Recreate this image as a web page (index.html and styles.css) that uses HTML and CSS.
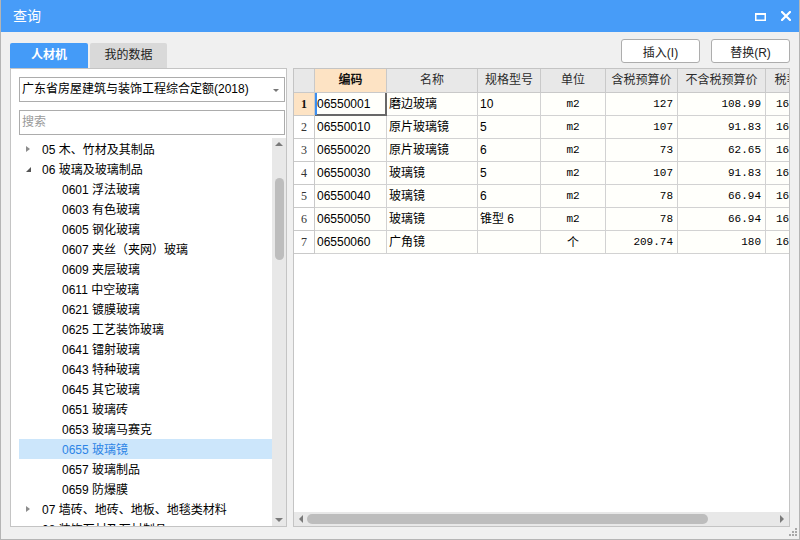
FILE: index.html
```html
<!DOCTYPE html>
<html lang="zh">
<head>
<meta charset="utf-8">
<title>查询</title>
<link rel="stylesheet" href="styles.css">
</head>
<body>
<div class="window">
  <div class="titlebar">
    <span class="title">查询</span>
    <div class="ctrls">
      <svg class="ic-max" width="11" height="8" viewBox="0 0 11 8"><rect x="0.75" y="1" width="9.5" height="6.25" fill="none" stroke="#fff" stroke-width="1.5"/><rect x="0" y="0" width="11" height="2" fill="#fff"/></svg>
      <svg class="ic-close" width="10" height="10" viewBox="0 0 10 10"><path d="M1 1L9 9M9 1L1 9" stroke="#fff" stroke-width="2.2" stroke-linecap="square"/></svg>
    </div>
  </div>

  <div class="toolbar">
    <div class="tabs">
      <div class="tab active">人材机</div>
      <div class="tab">我的数据</div>
    </div>
    <div class="btns">
      <button class="btn">插入(I)</button>
      <button class="btn">替换(R)</button>
    </div>
  </div>

  <div class="main">
    <div class="left">
      <div class="select">广东省房屋建筑与装饰工程综合定额(2018)<span class="caret"></span></div>
      <div class="search">搜索</div>
      <div class="tree">
        <div class="tree-list">
          <div class="node l1"><span class="arr closed"></span>05 木、竹材及其制品</div>
          <div class="node l1"><span class="arr open"></span>06 玻璃及玻璃制品</div>
          <div class="node l2">0601 浮法玻璃</div>
          <div class="node l2">0603 有色玻璃</div>
          <div class="node l2">0605 钢化玻璃</div>
          <div class="node l2">0607 夹丝（夹网）玻璃</div>
          <div class="node l2">0609 夹层玻璃</div>
          <div class="node l2">0611 中空玻璃</div>
          <div class="node l2">0621 镀膜玻璃</div>
          <div class="node l2">0625 工艺装饰玻璃</div>
          <div class="node l2">0641 镭射玻璃</div>
          <div class="node l2">0643 特种玻璃</div>
          <div class="node l2">0645 其它玻璃</div>
          <div class="node l2">0651 玻璃砖</div>
          <div class="node l2">0653 玻璃马赛克</div>
          <div class="node l2 sel">0655 玻璃镜</div>
          <div class="node l2">0657 玻璃制品</div>
          <div class="node l2">0659 防爆膜</div>
          <div class="node l1"><span class="arr closed"></span>07 墙砖、地砖、地板、地毯类材料</div>
          <div class="node l1"><span class="arr closed"></span>08 装饰石材及石材制品</div>
        </div>
        <div class="vscroll">
          <div class="sb-up"></div>
          <div class="sb-track"><div class="sb-thumb"></div></div>
          <div class="sb-down"></div>
        </div>
      </div>
    </div>

    <div class="right">
      <div class="grid-wrap">
        <div class="grid">
          <div class="h rn"></div>
          <div class="h hl">编码</div>
          <div class="h">名称</div>
          <div class="h">规格型号</div>
          <div class="h">单位</div>
          <div class="h">含税预算价</div>
          <div class="h">不含税预算价</div>
          <div class="h">税率</div>

          <div class="c rn hl">1</div><div class="c code focus">06550001</div><div class="c name">磨边玻璃</div><div class="c spec">10</div><div class="c unit">m2</div><div class="c num">127</div><div class="c num">108.99</div><div class="c tax">16</div>
          <div class="c rn">2</div><div class="c code">06550010</div><div class="c name">原片玻璃镜</div><div class="c spec">5</div><div class="c unit">m2</div><div class="c num">107</div><div class="c num">91.83</div><div class="c tax">16</div>
          <div class="c rn">3</div><div class="c code">06550020</div><div class="c name">原片玻璃镜</div><div class="c spec">6</div><div class="c unit">m2</div><div class="c num">73</div><div class="c num">62.65</div><div class="c tax">16</div>
          <div class="c rn">4</div><div class="c code">06550030</div><div class="c name">玻璃镜</div><div class="c spec">5</div><div class="c unit">m2</div><div class="c num">107</div><div class="c num">91.83</div><div class="c tax">16</div>
          <div class="c rn">5</div><div class="c code">06550040</div><div class="c name">玻璃镜</div><div class="c spec">6</div><div class="c unit">m2</div><div class="c num">78</div><div class="c num">66.94</div><div class="c tax">16</div>
          <div class="c rn">6</div><div class="c code">06550050</div><div class="c name">玻璃镜</div><div class="c spec">锥型 6</div><div class="c unit">m2</div><div class="c num">78</div><div class="c num">66.94</div><div class="c tax">16</div>
          <div class="c rn">7</div><div class="c code">06550060</div><div class="c name">广角镜</div><div class="c spec"></div><div class="c unit cjk">个</div><div class="c num">209.74</div><div class="c num">180</div><div class="c tax">16</div>
        </div>
      </div>
      <div class="hscroll">
        <div class="hs-left"></div>
        <div class="hs-track"><div class="hs-thumb"></div></div>
        <div class="hs-right"></div>
      </div>
    </div>
  </div>

  <div class="footer">
    <svg class="grip" width="9" height="9" viewBox="0 0 9 9" fill="#a8a8a8">
      <rect x="6" y="0" width="2" height="2"/>
      <rect x="3" y="3" width="2" height="2"/><rect x="6" y="3" width="2" height="2"/>
      <rect x="0" y="6" width="2" height="2"/><rect x="3" y="6" width="2" height="2"/><rect x="6" y="6" width="2" height="2"/>
    </svg>
  </div>
</div>
</body>
</html>
```

FILE: styles.css
```css
* { box-sizing: border-box; }

html, body {
  margin: 0;
  padding: 0;
  background: #f0f0f0;
}

body {
  font-family: "Liberation Sans", "Noto Sans CJK SC", sans-serif;
  font-size: 12px;
  color: #000;
}

.window {
  width: 800px;
  height: 540px;
  display: flex;
  flex-direction: column;
  background: #f0f0f0;
  border: 1px solid #b5b5b5;
  border-top: none;
  overflow: hidden;
}

/* title bar */
.titlebar {
  height: 32px;
  flex: none;
  background: #479cf8;
  display: flex;
  align-items: center;
  justify-content: space-between;
  padding: 0 9px 0 13px;
  margin: 0 -1px;
}

.title {
  color: #fff;
  font-size: 14px;
  line-height: 16px;
}

.ctrls {
  display: flex;
  align-items: center;
  gap: 15px;
}

.ic-max { margin-top: 1px; }

/* toolbar */
.toolbar {
  height: 36px;
  flex: none;
  display: flex;
  justify-content: space-between;
  padding: 0 9px 0 9px;
}

.tabs {
  display: flex;
  align-self: flex-end;
  gap: 2px;
}

.tab {
  width: 77px;
  height: 25px;
  line-height: 25px;
  text-align: center;
  background: #d9d9d9;
  color: #222;
  border-radius: 2px 2px 0 0;
  font-size: 12px;
}

.tab.active {
  width: 78px;
  background: #449bf8;
  color: #fff;
  font-weight: bold;
}

.btns {
  display: flex;
  gap: 11px;
  padding-top: 7px;
}

.btn {
  width: 79px;
  height: 24px;
  background: #fff;
  border: 1px solid #adadad;
  border-radius: 3px;
  font-family: inherit;
  font-size: 12px;
  color: #222;
  padding: 0;
}

/* main area */
.main {
  height: 459px;
  flex: none;
  display: flex;
  gap: 6px;
  padding: 0 9px 0 9px;
}

.left {
  width: 277px;
  flex: none;
  background: #fff;
  border: 1px solid #c4c4c4;
  padding: 8px 0 0 8px;
  display: flex;
  flex-direction: column;
}

.select {
  height: 25px;
  border: 1px solid #acacac;
  line-height: 23px;
  padding-left: 2px;
  position: relative;
  font-size: 12px;
  color: #000;
  margin-right: 1px;
}

.caret {
  position: absolute;
  right: 5px;
  top: 11px;
  width: 0;
  height: 0;
  border-left: 3px solid transparent;
  border-right: 3px solid transparent;
  border-top: 3px solid #777;
}

.search {
  height: 25px;
  margin-top: 8px;
  border: 1px solid #acacac;
  line-height: 23px;
  padding-left: 2px;
  color: #9a9a9a;
  margin-right: 1px;
}

.tree {
  flex: 1;
  min-height: 0;
  margin-top: 3px;
  display: flex;
  overflow: hidden;
}

.tree-list {
  flex: 1;
  padding-top: 1px;
  overflow: hidden;
}

.node {
  height: 20px;
  line-height: 22px;
  white-space: nowrap;
  position: relative;
}

.node.l1 { padding-left: 23px; }
.node.l2 { padding-left: 43px; }

.node.sel {
  background: #cce6fb;
  color: #2d84e6;
}

.arr {
  position: absolute;
  left: 7px;
  top: 7px;
  width: 0;
  height: 0;
}

.arr.closed {
  border-top: 3.5px solid transparent;
  border-bottom: 3.5px solid transparent;
  border-left: 4px solid #8c8c8c;
}

.arr.open {
  top: 8px;
  border-left: 5px solid transparent;
  border-bottom: 5px solid #555;
}

.vscroll {
  width: 14px;
  flex: none;
  background: #e8e8e8;
  display: flex;
  flex-direction: column;
  align-items: center;
}

.sb-up, .sb-down {
  height: 14px;
  width: 14px;
  position: relative;
  flex: none;
}

.sb-up::after, .sb-down::after {
  content: "";
  position: absolute;
  left: 3px;
  width: 0;
  height: 0;
  border-left: 4px solid transparent;
  border-right: 4px solid transparent;
}

.sb-up::after { top: 4px; border-bottom: 4px solid #7a7a7a; }
.sb-down::after { top: 6px; border-top: 4px solid #7a7a7a; }

.sb-track {
  flex: 1;
  width: 14px;
  display: flex;
  justify-content: center;
  padding-top: 26px;
}

.sb-thumb {
  width: 9px;
  height: 82px;
  background: #bdbdbd;
  border-radius: 5px;
}

/* right grid */
.right {
  width: 497px;
  flex: none;
  background: #fff;
  border: 1px solid #c4c4c4;
  display: flex;
  flex-direction: column;
  overflow: hidden;
}

.grid-wrap {
  flex: 1;
  min-height: 0;
  overflow: hidden;
}

.grid {
  display: grid;
  grid-template-columns: 21px 72px 91px 63px 65px 72px 88px 42px;
  grid-template-rows: 24px repeat(7, 23px);
  width: 514px;
}

.h, .c {
  border-right: 1px solid #d2d2d2;
  border-bottom: 1px solid #d2d2d2;
  white-space: nowrap;
  overflow: hidden;
}

.h {
  background: #e8e8e8;
  border-color: #c9c9c9;
  text-align: center;
  line-height: 23px;
  color: #2b2b2b;
}

.h.hl {
  background: #fde3c4;
  font-weight: bold;
  color: #111;
}

.c {
  background: #fffffb;
  line-height: 22px;
}

.c.rn {
  text-align: center;
  font-family: "Liberation Serif", "DejaVu Serif", serif;
  font-size: 12px;
  color: #333;
  background: #fff;
  border-color: #c9c9c9;
}

.c.rn.hl {
  background: #fde3c4;
  font-weight: bold;
  color: #111;
}

.c.code { padding-left: 2px; }

.c.focus {
  border-right-color: #686868;
  border-bottom-color: #686868;
  box-shadow: inset 2px 0 #3b8ef0, inset -1px 0 #686868, inset 0 -1px #686868;
}

.c.name { padding-left: 2px; }
.c.spec { padding-left: 2px; }

.c.unit {
  text-align: center;
  font-family: "Liberation Mono", "DejaVu Sans Mono", monospace;
  font-size: 11px;
}

.c.unit.cjk {
  font-family: "Noto Sans CJK SC", sans-serif;
  font-size: 12px;
}

.c.num {
  text-align: right;
  padding-right: 4px;
  font-family: "Liberation Mono", "DejaVu Sans Mono", monospace;
  font-size: 11px;
}

.c.tax {
  padding-left: 10px;
  font-family: "Liberation Mono", "DejaVu Sans Mono", monospace;
  font-size: 11px;
}

.hscroll {
  height: 14px;
  flex: none;
  background: #e8e8e8;
  display: flex;
  align-items: center;
}

.hs-left, .hs-right {
  width: 13px;
  height: 14px;
  flex: none;
  position: relative;
}

.hs-left::after, .hs-right::after {
  content: "";
  position: absolute;
  top: 3px;
  width: 0;
  height: 0;
  border-top: 4px solid transparent;
  border-bottom: 4px solid transparent;
}

.hs-left::after { left: 5px; border-right: 4px solid #7a7a7a; }
.hs-right::after { left: 4px; border-left: 4px solid #7a7a7a; }

.hs-track {
  flex: 1;
  height: 14px;
  display: flex;
  align-items: center;
}

.hs-thumb {
  width: 401px;
  height: 10px;
  background: #bdbdbd;
  border-radius: 5px;
}

.footer {
  flex: 1;
  display: flex;
  justify-content: flex-end;
  align-items: flex-end;
  padding: 0 1px 2px 0;
}
```
